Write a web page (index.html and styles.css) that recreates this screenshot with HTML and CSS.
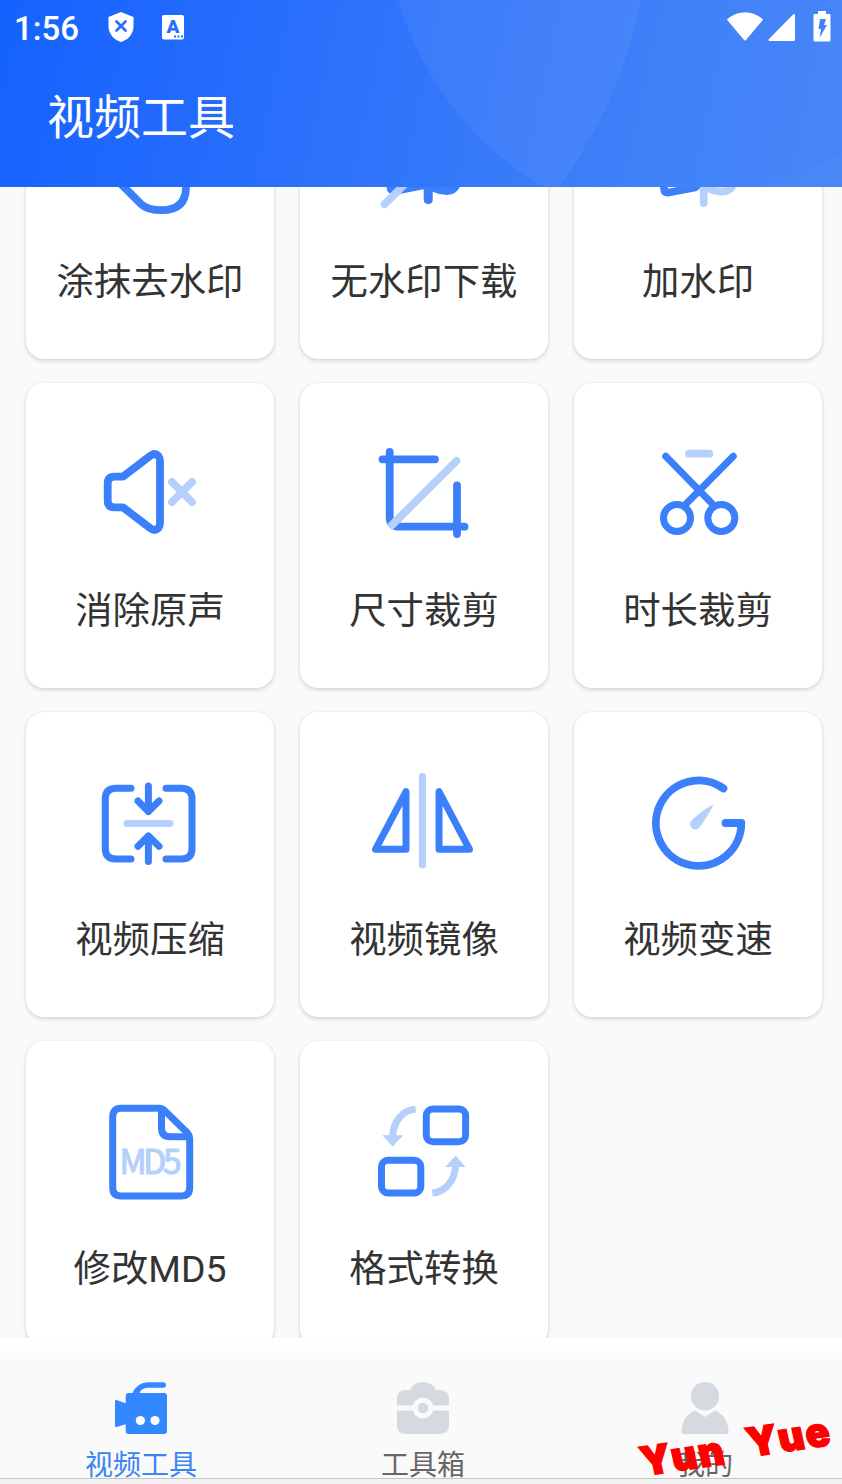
FILE: index.html
```html
<!DOCTYPE html>
<html lang="zh-CN">
<head>
    <meta charset="UTF-8">
    <meta name="viewport" content="width=device-width, initial-scale=1.0">
    <title>视频工具</title>
    <link rel="stylesheet" href="styles.css">
</head>
<body>
    <header class="header">
        <svg class="header-bg" viewBox="0 0 842 187">
            <path d="M398 0C420 76 474 148 545 187H559C598 133 627 70 641 0Z"/>
            <path class="faint" d="M745 187C790 178 820 166 842 152V187Z"/>
        </svg>
        <div class="status">
            <span class="time">1:56</span>
            <svg class="shield" width="26" height="30" viewBox="0 0 26 30">
                <path fill="#fff" d="M13 0L25.500 5V14C25.500 22 20 28 13 30C6 28 .5 22 .5 14V5Z"/>
                <path stroke="#2a6ffc" stroke-width="2.800" stroke-linecap="round" d="M8.500 9.500L17.500 18.500M17.500 9.500L8.500 18.500"/>
            </svg>
            <svg class="letter" width="22" height="26" viewBox="0 0 22 26">
                <rect y="1" width="22" height="24.500" rx="2" fill="#fff"/>
                <text x="11" y="18.500" text-anchor="middle">A</text>
                <path stroke="#2a6ffc" stroke-width="2" stroke-dasharray="2 1.500" d="M12 22.500H21"/>
            </svg>
            <div class="signals">
                <svg width="36" height="30" viewBox="0 0 36 30">
                    <path fill="#fff" stroke="#fff" stroke-width="2" stroke-linejoin="round" d="M1.200 7.500Q18 -5 34.800 7.500L18 27.500Z"/>
                </svg>
                <svg width="28" height="30" viewBox="0 0 28 30">
                    <path fill="#fff" stroke="#fff" stroke-width="2" stroke-linejoin="round" d="M26 3V28H1.500Z"/>
                </svg>
                <svg class="battery" width="18" height="31" viewBox="0 0 18 31">
                    <path fill="#fff" d="M5 0H13V3H16.500Q17.500 3 17.500 4V29.500Q17.500 30.500 16.500 30.500H1.500Q.5 30.500 .5 29.500V4Q.5 3 1.500 3H5Z"/>
                    <path fill="#4383f8" d="M7 8H13L11 14H14L6.500 27L8 18H5.500Z"/>
                </svg>
            </div>
        </div>
        <h1>视频工具</h1>
    </header>

    <main class="content">
        <div class="tools">
            <div class="card">
                <svg class="icon" viewBox="0 0 120 120">
                    <path d="M28 78L51 101Q57 107.200 71.700 107.200Q96 107.200 96 84V76"/>
                </svg>
                <p>涂抹去水印</p>
            </div>
            <div class="card">
                <svg class="icon" viewBox="0 0 120 120">
                    <path class="solid" d="M22 78L23 87Q24 91 30 91L38 90.500L59.700 86.300V97Q60 101 64.300 101T68.700 97V88.700Q76 92 83 92Q94 91 96.500 82V78Z"/>
                    <path class="light" d="M20.500 101.300L44 78"/>
                </svg>
                <p>无水印下载</p>
            </div>
            <div class="card">
                <svg class="icon" viewBox="0 0 120 120">
                    <path d="M25 78L26.500 88Q27.500 90 31 89.500L57 84.500L63 80"/>
                    <path class="light butt" d="M68 84Q78 90 88 88Q95 86 95 78"/>
                    <path class="light" d="M65.700 80V100"/>
                </svg>
                <p>加水印</p>
            </div>
            <div class="card">
                <svg class="icon" viewBox="0 0 120 120">
                    <path d="M24.500 44.700H33L60.500 23.600Q65 20.500 68.500 24Q70 26 70 29V91Q70 94 68.500 96Q65 99.500 60.500 96.400L33 75.300H24.500Q17.700 75.300 17.700 68.500V51.500Q17.700 44.700 24.500 44.700Z"/>
                    <path class="light" d="M82 50L102 70M102 50L82 70"/>
                </svg>
                <p>消除原声</p>
            </div>
            <div class="card">
                <svg class="icon" viewBox="0 0 120 120">
                    <path d="M18.500 27.300H71M25.700 20V85Q25.700 94.700 36 94.700H100.500M93 53.500V102"/>
                    <path class="light butt" d="M25.500 95.500L40 81"/>
                    <path class="light" d="M30 91L92.500 29"/>
                </svg>
                <p>尺寸裁剪</p>
            </div>
            <div class="card">
                <svg class="icon" viewBox="0 0 120 120">
                    <path class="thin" d="M27.700 24.300L74.500 72M95.300 24.300L48 72"/>
                    <circle class="thin" cx="39" cy="86" r="13.500"/>
                    <circle class="thin" cx="83.300" cy="86" r="13.500"/>
                    <path class="light" d="M51 21.700H71.300"/>
                </svg>
                <p>时长裁剪</p>
            </div>
            <div class="card">
                <svg class="icon" viewBox="0 0 120 120">
                    <path class="thin" d="M41 27.300H26Q15.300 27.300 15.300 38V87.500Q15.300 98 26 98H41M76 27.300H91.500Q102 27.300 102 38V87.500Q102 98 91.500 98H76"/>
                    <path class="thin" d="M58.400 25V50.500M48 40L58.400 50.500L69 40M58.400 100.500V75M48 85.300L58.400 75L69 85.300"/>
                    <path class="light thin" d="M37 62.500H80"/>
                </svg>
                <p>视频压缩</p>
            </div>
            <div class="card">
                <svg class="icon" viewBox="0 0 120 120">
                    <path class="thin" d="M42 30.700V88.300H11.500ZM75 30.700V88.300H105.500Z"/>
                    <path class="light thin" d="M58.400 15.500V104"/>
                </svg>
                <p>视频镜像</p>
            </div>
            <div class="card">
                <svg class="icon" viewBox="0 0 120 120">
                    <path d="M85.500 27.500A42.700 42.700 0 1 0 103.300 62H87.500"/>
                    <path class="needle" d="M75.700 43.300Q63 50 53.600 59.500A5 5 0 0 0 61 67Q69 57 75.700 43.300Z"/>
                </svg>
                <p>视频变速</p>
            </div>
            <div class="card">
                <svg class="icon" viewBox="0 0 120 120">
                    <path class="thin" d="M31 18.300H70Q72 18.300 74 20L97.500 43Q99.700 45.500 99.700 48V97.500Q99.700 106 91 106H31Q22.700 106 22.700 97.500V27Q22.700 18.300 31 18.300Z"/>
                    <path class="thin butt" d="M71.500 20V38Q71.500 46.700 80 46.700H98"/>
                    <text x="29.500" y="83.500" textLength="62" lengthAdjust="spacing">MD5</text>
                </svg>
                <p>修改MD5</p>
            </div>
            <div class="card">
                <svg class="icon" viewBox="0 0 120 120">
                    <rect class="thin" x="62.300" y="19" width="39.300" height="32.700" rx="6.500"/>
                    <rect class="thin" x="17.500" y="70.300" width="39.300" height="32.700" rx="6.500"/>
                    <path class="light thin butt" d="M51.700 19C39 20 29 31 28.700 47M68.300 103C81 102 91 91 91.700 75"/>
                    <path class="needle" d="M18.300 45.300H39.300L28.700 56.500ZM81 77H101.700L91.700 65.700Z"/>
                </svg>
                <p>格式转换</p>
            </div>
        </div>
    </main>

    <nav class="tabs">
        <div class="tab active">
            <svg width="52" height="52" viewBox="0 0 52 52">
                <path d="M0 19Q0 17.500 1.500 18L10.700 21.300V14Q10.700 11 13.700 11H17.500Q22 1 32 .2H48Q51 .2 51 3T48 5.700H32Q26 6.500 24.500 11H49Q52 11 52 14V49Q52 52 49 52H13.700Q10.700 52 10.700 49V42.300L1.500 45Q0 45.300 0 44Z"/>
                <circle class="hole" cx="25.400" cy="38.500" r="4.600"/>
                <circle class="hole" cx="40" cy="38.500" r="4.600"/>
            </svg>
            <span>视频工具</span>
        </div>
        <div class="tab">
            <svg width="52" height="52" viewBox="0 0 52 52">
                <path d="M0 23.500V17Q0 8 9 8H13Q17 0 26 0T39 8H43Q52 8 52 17V23.500ZM0 28.500H52V43Q52 52 43 52H9Q0 52 0 43Z"/>
                <circle class="hole" cx="26" cy="26" r="10.500"/>
                <circle cx="26" cy="26" r="5.300"/>
            </svg>
            <span>工具箱</span>
        </div>
        <div class="tab">
            <svg width="52" height="52" viewBox="0 0 52 52">
                <circle cx="26" cy="14.300" r="14.200"/>
                <path d="M2.500 50Q3 34 16 28.500L26 35L36 28.500Q49 34 49.500 50Q49.500 52 47.500 52H4.500Q2.500 52 2.500 50Z"/>
            </svg>
            <span>我的</span>
        </div>
        <svg class="stamp" width="212" height="84" viewBox="630 1400 212 84">
            <text transform="translate(647 1475.500) rotate(-8.500) skewX(4)" x="-3" textLength="85" lengthAdjust="spacingAndGlyphs">Yun</text>
            <text transform="translate(753 1456.500) rotate(-8.500) skewX(4)" x="-3" textLength="85" lengthAdjust="spacingAndGlyphs">Yue</text>
        </svg>
    </nav>
    <div class="bottom-bar"></div>
</body>
</html>
```
FILE: styles.css
```css
* {
    box-sizing: border-box;
    margin: 0;
    padding: 0;
}
body {
    display: flex;
    flex-direction: column;
    height: 1484px;
    overflow: hidden;
    background-color: #fafafa;
    font-family: Roboto, "Noto Sans CJK SC", sans-serif;
}
svg {
    display: block;
    flex: none;
    fill: none;
}
.header {
    position: relative;
    height: 187px;
    flex: none;
    background: linear-gradient(102deg, #1462ff 0%, #246bfd 25%, #377af9 60%, #4182f8 80%, #4885f7 100%);
    color: #fff;
}
.header-bg {
    position: absolute;
    top: 0;
    left: 0;
    width: 842px;
    height: 187px;
    fill: rgba(255, 255, 255, 0.05);
}
.header-bg .faint {
    fill: rgba(255, 255, 255, 0.02);
}
.status {
    position: relative;
    display: flex;
    align-items: center;
    height: 54px;
    padding: 0 11px 0 14px;
}
.time {
    width: 94px;
    font-size: 33px;
    font-weight: 500;
    line-height: 40px;
    padding-top: 3px;
}
.letter {
    margin-left: 28px;
}
.letter text {
    font-size: 19px;
    font-weight: 900;
    fill: #2a6ffc;
}
.signals {
    display: flex;
    align-items: center;
    margin-left: auto;
    margin-top: -1px;
    gap: 5px;
}
.battery {
    margin-left: 12px;
}
h1 {
    position: relative;
    padding-left: 47px;
    padding-top: 29px;
    font-size: 47px;
    font-weight: 400;
    line-height: 70px;
}
.content {
    flex: none;
    height: 1151px;
    overflow: hidden;
}
/* list is scrolled, first row sits partly under the header */
.tools {
    display: grid;
    grid-template-columns: repeat(3, 248px);
    grid-auto-rows: 305px;
    gap: 24px 26px;
    margin-top: -133px;
    padding-left: 26px;
}
.card {
    display: flex;
    flex-direction: column;
    align-items: center;
    padding-top: 49px;
    border-radius: 18px;
    background-color: #fff;
    box-shadow: 0 2px 4px rgba(0, 0, 0, 0.14), 0 0 2px rgba(0, 0, 0, 0.08);
}
.card p {
    margin-top: 32px;
    font-size: 37.4px;
    line-height: 54px;
    color: #333;
    white-space: nowrap;
}
.icon {
    width: 120px;
    height: 120px;
    stroke: #3b80fa;
    stroke-width: 7.8;
    stroke-linecap: round;
    stroke-linejoin: round;
}
.icon .thin {
    stroke-width: 7;
}
.icon .light {
    stroke: #b5d0fb;
}
.icon .butt {
    stroke-linecap: butt;
}
.icon .solid {
    fill: #3b80fa;
    stroke: none;
}
.icon .needle {
    fill: #b5d0fb;
    stroke: none;
}
.icon text {
    font-family: "Noto Sans CJK SC", sans-serif;
    font-size: 33.5px;
    font-weight: 400;
    fill: #b5d0fb;
    stroke: #b5d0fb;
    stroke-width: 1.2;
}
.tabs {
    position: relative;
    display: flex;
    flex: none;
    height: 140px;
    padding-top: 44px;
    background: linear-gradient(#fff, #fafafa 22px);
}
.tab {
    display: flex;
    flex: 0 0 282px;
    flex-direction: column;
    align-items: center;
    gap: 17px;
    color: #666;
    font-size: 28px;
    line-height: 30px;
}
.tab svg {
    fill: #d5d9e0;
}
.tab .hole {
    fill: #fafafa;
}
.tab.active {
    color: #3a84f4;
}
.tab.active svg {
    fill: #3488ff;
}
.stamp {
    position: absolute;
    right: 0;
    bottom: -6px;
    overflow: visible;
}
.stamp text {
    font-family: Inter, sans-serif;
    font-size: 40px;
    font-weight: 900;
    letter-spacing: 2px;
    fill: #f00;
    stroke: #f00;
    stroke-width: 1.6;
}
.bottom-bar {
    flex: none;
    height: 6px;
    border-top: 1px solid #c4c4c4;
    background-color: #f2f2f2;
}
```
